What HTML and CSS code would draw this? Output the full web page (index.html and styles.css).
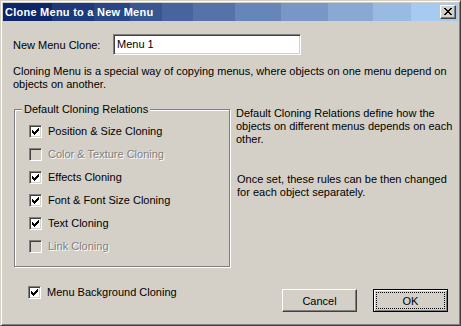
FILE: index.html
```html
<!DOCTYPE html>
<html>
<head>
<meta charset="utf-8">
<link rel="stylesheet" href="styles.css">
</head>
<body>
<div class="window">
  <div class="titlebar">
    <span class="title">Clone Menu to a New Menu</span>
    <span class="close"><svg width="8" height="7" viewBox="0 0 8 7" shape-rendering="crispEdges"><path fill="#000" d="M0 0h2v1h-2z M6 0h2v1h-2z M1 1h2v1h-2z M5 1h2v1h-2z M2 2h4v1h-4z M3 3h2v1h-2z M2 4h4v1h-4z M1 5h2v1h-2z M5 5h2v1h-2z M0 6h2v1h-2z M6 6h2v1h-2z"/></svg></span>
  </div>
  <div class="content">
    <div class="name-row">
      <span class="name-label">New Menu Clone:</span>
      <span class="input">Menu 1</span>
    </div>
    <p class="intro">Cloning Menu is a special way of copying menus, where objects on one menu depend on objects on another.</p>
    <div class="middle">
      <div class="group">
        <span class="legend">Default Cloning Relations</span>
        <div class="check"><span class="box"><svg width="7" height="7" viewBox="0 0 7 7" shape-rendering="crispEdges"><path d="M0 2h1v3h-1z M1 3h1v3h-1z M2 4h1v3h-1z M3 3h1v3h-1z M4 2h1v3h-1z M5 1h1v3h-1z M6 0h1v3h-1z"/></svg></span><span>Position &amp; Size Cloning</span></div>
        <div class="check disabled"><span class="box"></span><span>Color &amp; Texture Cloning</span></div>
        <div class="check"><span class="box"><svg width="7" height="7" viewBox="0 0 7 7" shape-rendering="crispEdges"><path d="M0 2h1v3h-1z M1 3h1v3h-1z M2 4h1v3h-1z M3 3h1v3h-1z M4 2h1v3h-1z M5 1h1v3h-1z M6 0h1v3h-1z"/></svg></span><span>Effects Cloning</span></div>
        <div class="check"><span class="box"><svg width="7" height="7" viewBox="0 0 7 7" shape-rendering="crispEdges"><path d="M0 2h1v3h-1z M1 3h1v3h-1z M2 4h1v3h-1z M3 3h1v3h-1z M4 2h1v3h-1z M5 1h1v3h-1z M6 0h1v3h-1z"/></svg></span><span>Font &amp; Font Size Cloning</span></div>
        <div class="check"><span class="box"><svg width="7" height="7" viewBox="0 0 7 7" shape-rendering="crispEdges"><path d="M0 2h1v3h-1z M1 3h1v3h-1z M2 4h1v3h-1z M3 3h1v3h-1z M4 2h1v3h-1z M5 1h1v3h-1z M6 0h1v3h-1z"/></svg></span><span>Text Cloning</span></div>
        <div class="check disabled"><span class="box"></span><span>Link Cloning</span></div>
      </div>
      <div class="notes">
        <p class="note1">Default Cloning Relations define how the objects on different menus depends on each other.</p>
        <p class="note2">Once set, these rules can be then changed for each object separately.</p>
      </div>
    </div>
    <div class="bottom">
      <div class="check bg-check"><span class="box"><svg width="7" height="7" viewBox="0 0 7 7" shape-rendering="crispEdges"><path d="M0 2h1v3h-1z M1 3h1v3h-1z M2 4h1v3h-1z M3 3h1v3h-1z M4 2h1v3h-1z M5 1h1v3h-1z M6 0h1v3h-1z"/></svg></span><span>Menu Background Cloning</span></div>
      <div class="buttons">
        <span class="btn">Cancel</span>
        <span class="btn default"><span class="focus">OK</span></span>
      </div>
    </div>
  </div>
</div>
</body>
</html>
```
FILE: styles.css
```css
* { box-sizing: border-box; }
html, body { margin: 0; padding: 0; }
body {
  width: 461px;
  height: 326px;
  background: #d4d0c8;
  font-family: "Liberation Sans", Arial, sans-serif;
  font-size: 11px;
  color: #000;
  overflow: hidden;
}
.window {
  width: 461px;
  height: 326px;
  background: #d4d0c8;
  border-top: 1px solid #d4d0c8;
  border-left: 1px solid #d4d0c8;
  border-right: 1px solid #404040;
  border-bottom: 1px solid #404040;
  box-shadow: inset 1px 1px #ffffff, inset -1px -1px #808080;
  padding: 2px;
  display: flex;
  flex-direction: column;
}
.titlebar {
  height: 18px;
  display: flex;
  align-items: center;
  justify-content: space-between;
  padding: 0 2px 0 2px;
  background: linear-gradient(to right,
    #0c266b 0px, #0c266b 49px,
    #1b397b 49px, #1b397b 91px,
    #294787 91px, #294787 127px,
    #385693 127px, #385693 159px,
    #47649e 159px, #47649e 190px,
    #5573a9 190px, #5573a9 232px,
    #6685b9 232px, #6685b9 278px,
    #7897c6 278px, #7897c6 325px,
    #89a9d4 325px, #89a9d4 370px,
    #99bbe1 370px, #99bbe1 408px,
    #a6caf0 408px, #a6caf0 100%);
}
.title {
  color: #fff;
  font-weight: bold;
  font-size: 11px;
  letter-spacing: 0.25px;
  line-height: 18px;
  white-space: nowrap;
}
.close {
  width: 16px;
  height: 14px;
  background: #d4d0c8;
  border-top: 1px solid #ffffff;
  border-left: 1px solid #ffffff;
  border-right: 1px solid #404040;
  border-bottom: 1px solid #404040;
  box-shadow: inset -1px -1px #808080;
  display: flex;
  padding: 2px 0 0 3px;
}
.close svg { display: block; }
.content {
  flex: 1;
  padding: 13px 10px 0 10px;
  display: flex;
  flex-direction: column;
}
.name-row {
  display: flex;
  align-items: center;
  height: 21px;
}
.name-label {
  width: 100px;
}
.input {
  width: 188px;
  height: 21px;
  background: #fff;
  border-top: 1px solid #808080;
  border-left: 1px solid #808080;
  border-right: 1px solid #ffffff;
  border-bottom: 1px solid #ffffff;
  box-shadow: inset 1px 1px #404040, inset -1px -1px #d4d0c8;
  padding: 0 3px;
  line-height: 19px;
}
.intro {
  margin: 10px 0 0 0;
  line-height: 13px;
}
.middle {
  margin-top: 16px;
  display: flex;
  align-items: flex-start;
}
.group {
  position: relative;
  margin: 2px 0 0 1px;
  width: 216px;
  height: 158px;
  flex: none;
  border: 1px solid #808080;
  box-shadow: inset 1px 1px #ffffff, 1px 1px #ffffff;
  padding: 10px 0 0 14px;
}
.legend {
  position: absolute;
  top: -7px;
  left: 7px;
  padding: 0 2px;
  background: #d4d0c8;
  line-height: 13px;
  white-space: nowrap;
}
.check {
  display: flex;
  align-items: center;
  height: 23px;
  line-height: 13px;
  white-space: nowrap;
}
.box {
  width: 13px;
  height: 13px;
  flex: none;
  margin-right: 6px;
  background: #fff;
  border-top: 1px solid #808080;
  border-left: 1px solid #808080;
  border-right: 1px solid #ffffff;
  border-bottom: 1px solid #ffffff;
  box-shadow: inset 1px 1px #404040, inset -1px -1px #d4d0c8;
  padding: 2px 0 0 2px;
}
.box svg { display: block; fill: #000; }
.check.disabled .box { background: #d4d0c8; }
.check.disabled span:last-child {
  color: #808080;
  text-shadow: 1px 1px #ffffff;
}
.notes {
  margin-left: 6px;
  width: 224px;
  flex: none;
}
.notes p {
  margin: 0;
  line-height: 13px;
}
.note2 {
  margin-top: 27px !important;
  padding-left: 1px;
}
.bottom {
  margin-top: 19px;
  display: flex;
  align-items: flex-start;
  justify-content: space-between;
}
.bg-check {
  height: 13px;
  margin-left: 15px;
}
.buttons {
  margin-top: 3px;
  display: flex;
  gap: 16px;
}
.btn {
  width: 75px;
  height: 23px;
  display: flex;
  align-items: center;
  justify-content: center;
  background: #d4d0c8;
  border-top: 1px solid #ffffff;
  border-left: 1px solid #ffffff;
  border-right: 1px solid #404040;
  border-bottom: 1px solid #404040;
  box-shadow: inset -1px -1px #808080;
}
.btn.default {
  border: 1px solid #000;
  box-shadow: inset 1px 1px #ffffff, inset -1px -1px #808080;
  padding: 3px;
}
.focus {
  flex: 1;
  height: 100%;
  display: flex;
  align-items: center;
  justify-content: center;
  outline: 1px dotted #000;
}
```
